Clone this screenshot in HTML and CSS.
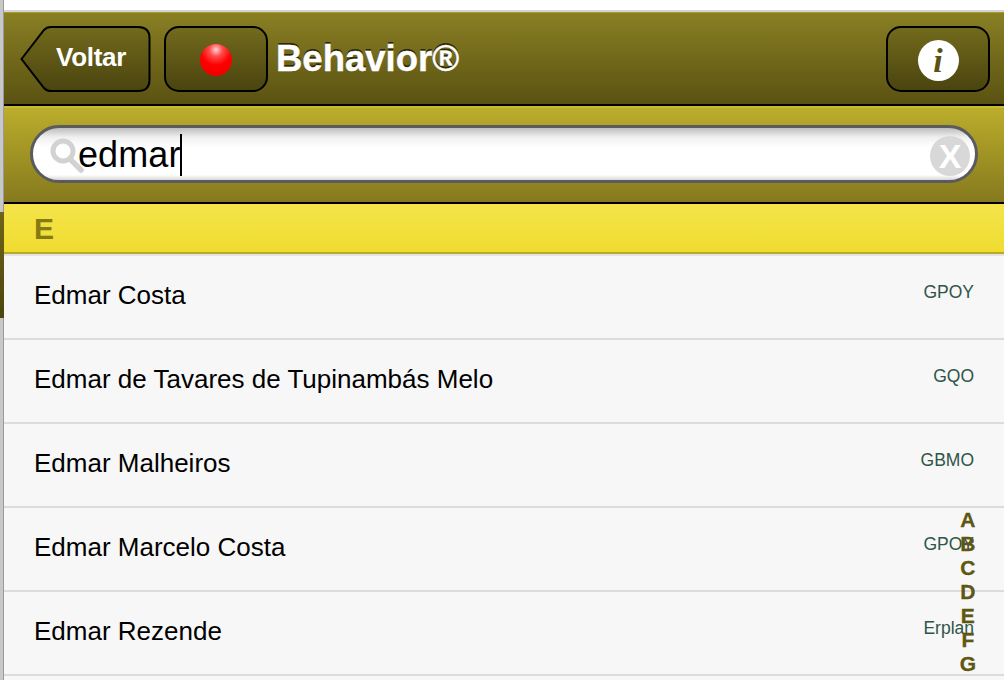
FILE: index.html
```html
<!DOCTYPE html>
<html lang="pt-BR">
<head>
    <meta charset="UTF-8">
    <title>Behavior</title>
    <link rel="stylesheet" href="styles.css">
</head>
<body>
    <div class="backdrop">
        <div class="backdrop-band"></div>
    </div>
    <div class="app">
        <header class="topbar">
            <a class="btn btn-back">
                <svg class="back-shape" width="131" height="66" viewBox="0 0 131 66">
                    <defs>
                        <linearGradient id="backFill" x1="0" y1="0" x2="0" y2="1">
                            <stop offset="0" stop-color="#726a1c"/>
                            <stop offset="1" stop-color="#4b440f"/>
                        </linearGradient>
                    </defs>
                    <path d="M1.500 33 L24 4 Q26.500 1 31 1 H118 Q129.500 1 129.500 12 V54 Q129.500 65 118 65 H31 Q26.500 65 24 62 Z" fill="url(#backFill)" stroke="#000" stroke-width="2"/>
                </svg>
                <span class="back-label">Voltar</span>
            </a>
            <a class="btn btn-status"><span class="led"></span></a>
            <h1 class="title">Behavior®</h1>
            <a class="btn btn-info"><span class="info-icon">i</span></a>
        </header>

        <div class="searchbar">
            <div class="search-field">
                <svg class="search-icon" width="38" height="38" viewBox="0 0 38 38">
                    <circle cx="15" cy="14" r="10" fill="none" stroke="#d2d2d2" stroke-width="5"/>
                    <path d="M22 22 L33 33" stroke="#d2d2d2" stroke-width="5.500" stroke-linecap="round"/>
                </svg>
                <span class="search-text">edmar</span><span class="caret"></span>
                <span class="clear-btn">X</span>
            </div>
        </div>

        <div class="section-head">E</div>

        <ul class="people">
            <li class="person"><span class="person-name">Edmar Costa</span><span class="person-unit">GPOY</span></li>
            <li class="person"><span class="person-name">Edmar de Tavares de Tupinambás Melo</span><span class="person-unit">GQO</span></li>
            <li class="person"><span class="person-name">Edmar Malheiros</span><span class="person-unit">GBMO</span></li>
            <li class="person"><span class="person-name">Edmar Marcelo Costa</span><span class="person-unit">GPOY</span></li>
            <li class="person"><span class="person-name">Edmar Rezende</span><span class="person-unit">Erplan</span></li>
        </ul>

        <nav class="alpha-index">
            <span>A</span><span>B</span><span>C</span><span>D</span><span>E</span><span>F</span><span>G</span>
        </nav>
    </div>
</body>
</html>
```

FILE: styles.css
```css
html, body {
    margin: 0;
    padding: 0;
    height: 680px;
    overflow: hidden;
    background: #fff;
    font-family: "Liberation Sans", Arial, sans-serif;
}
.backdrop {
    position: absolute;
    left: 0;
    top: 0;
    width: 4px;
    height: 680px;
    background: #c8c8c8;
    box-shadow: inset -1px 0 0 #9a9a9a;
}
.backdrop-band {
    margin-top: 212px;
    height: 106px;
    background: linear-gradient(#6e6518, #4b440f);
}
.app {
    position: absolute;
    left: 4px;
    top: 10px;
    width: 1000px;
    height: 670px;
    overflow: hidden;
    border-top: 2px solid #d4d4d4;
    background: #f7f7f7;
}
.topbar {
    height: 90px;
    display: flex;
    align-items: center;
    padding: 2px 14px 0 16px;
    background: linear-gradient(#8a8024, #5a5212);
    border-bottom: 2px solid #000;
    box-shadow: inset 0 1px 0 #a89c2c;
}
.btn {
    display: flex;
    align-items: center;
    justify-content: center;
    box-sizing: border-box;
    height: 66px;
}
.btn-back {
    position: relative;
    width: 131px;
    margin-right: 13px;
}
.back-shape {
    position: absolute;
    left: 0;
    top: 0;
}
.back-label {
    position: relative;
    margin: -4px 0 0 11px;
    color: #fff;
    font-size: 26px;
    font-weight: bold;
    letter-spacing: -0.3px;
}
.btn-status, .btn-info {
    width: 104px;
    border: 2px solid #000;
    border-radius: 15px;
    background: linear-gradient(#726a1c, #4b440f);
}
.led {
    width: 32px;
    height: 32px;
    margin-top: 2px;
    border-radius: 50%;
    background: radial-gradient(circle at 50% 18%, #ffd0d0 0, #ff4a4a 22%, #f00 50%, #e80000 100%);
}
.title {
    flex: 1;
    margin: 0 0 0 8px;
    color: #fff;
    font-size: 36.500px;
    font-weight: bold;
    text-shadow: 0 -2px 0 #2b2708;
    -webkit-text-stroke: 0.4px #fff;
}
.info-icon {
    width: 41px;
    height: 41px;
    margin-top: 2px;
    border-radius: 50%;
    background: #fff;
    color: #5a5212;
    font-family: "Liberation Serif", serif;
    font-size: 34px;
    font-weight: bold;
    font-style: italic;
    line-height: 41px;
    text-align: center;
}
.searchbar {
    height: 96px;
    display: flex;
    align-items: center;
    padding: 0 26px;
    background: linear-gradient(#bcae2c, #85791e);
    border-bottom: 2px solid #000;
    box-shadow: inset 0 2px 0 #c9ba30;
}
.search-field {
    position: relative;
    flex: 1;
    height: 58px;
    box-sizing: border-box;
    display: flex;
    align-items: center;
    padding: 2px 0 0 45px;
    border: 3px solid #5a5a60;
    border-radius: 29px;
    background: linear-gradient(#bdbdbd 0, #f0f0f0 18%, #fff 36%, #fff 90%, #d8d8d8 100%);
}
.search-icon {
    position: absolute;
    left: 15px;
    top: 9px;
}
.search-text {
    color: #000;
    font-size: 36px;
    letter-spacing: 0.1px;
}
.caret {
    width: 2px;
    height: 42px;
    background: #000;
    margin-left: -1px;
}
.clear-btn {
    position: absolute;
    right: 5px;
    top: 8px;
    width: 40px;
    height: 40px;
    border-radius: 50%;
    background: #d8d8d8;
    color: #fff;
    font-size: 34px;
    font-weight: bold;
    line-height: 41px;
    text-align: center;
}
.section-head {
    height: 50px;
    box-sizing: border-box;
    padding: 1px 0 0 30px;
    background: linear-gradient(#f4e44a, #f0dc30);
    border-bottom: 2px solid #b8aa28;
    color: #857a14;
    font-size: 30px;
    font-weight: bold;
    line-height: 48px;
}
.people {
    margin: 0;
    padding: 0;
    list-style: none;
    border-top: 2px solid #e4e4e4;
}
.person {
    display: flex;
    justify-content: space-between;
    box-sizing: border-box;
    height: 84px;
    padding: 0 30px;
    border-bottom: 2px solid #dcdcdc;
    background: #f7f7f7;
}
.person-name {
    padding-top: 24px;
    color: #000;
    font-size: 26px;
    line-height: 30px;
}
.person-unit {
    padding-top: 25px;
    color: #2f5548;
    font-size: 17.500px;
    line-height: 22px;
}
.alpha-index {
    position: absolute;
    right: 28px;
    top: 496px;
    display: flex;
    flex-direction: column;
    align-items: center;
    color: #5f5612;
    font-size: 21px;
    font-weight: bold;
    line-height: 24px;
    -webkit-text-stroke: 0.3px #5f5612;
}
```
